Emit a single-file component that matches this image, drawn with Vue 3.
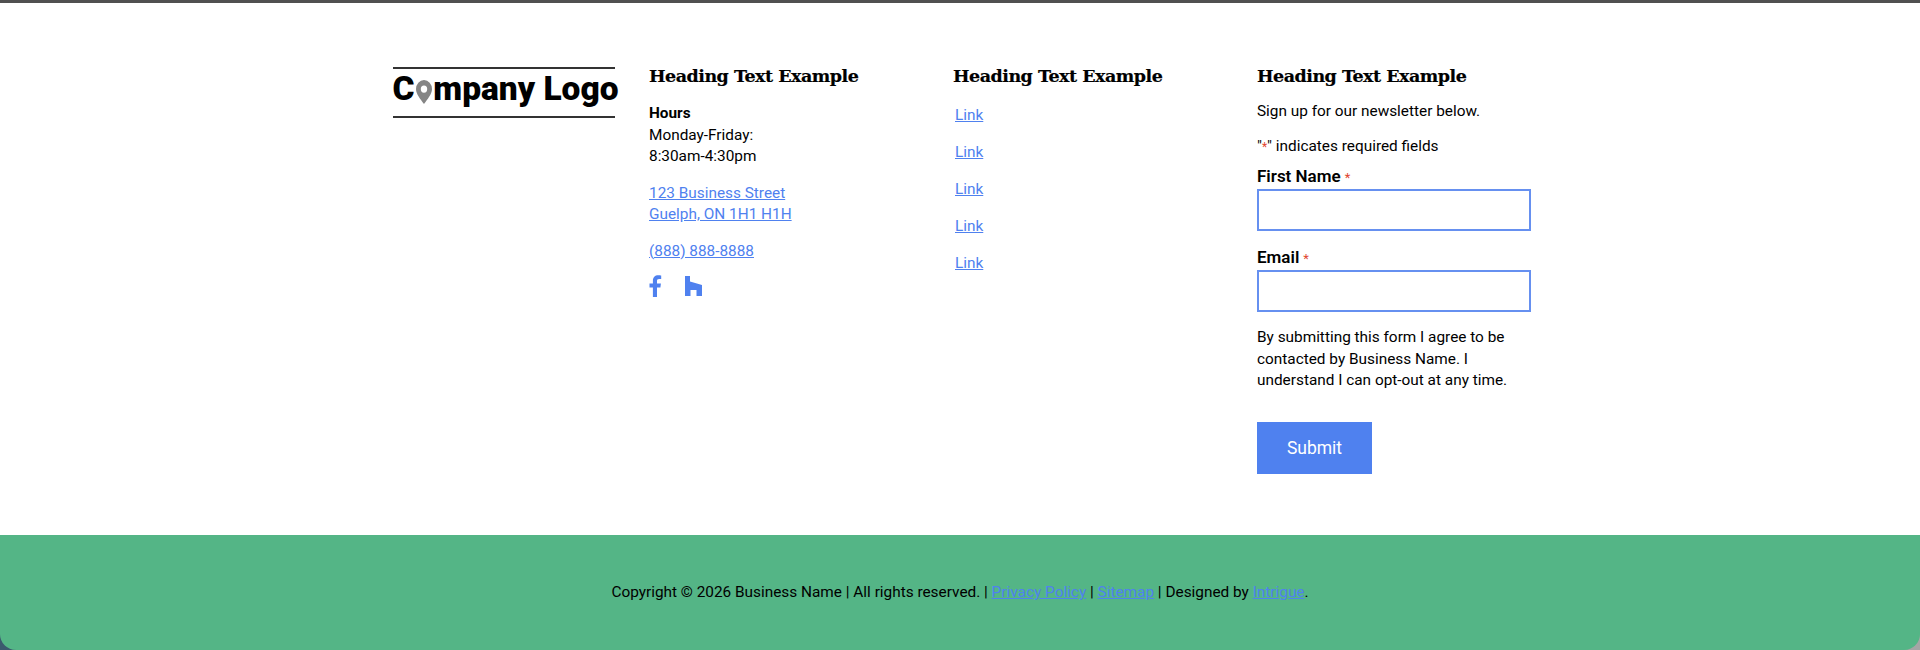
<script setup>
const links = ['Link', 'Link', 'Link', 'Link', 'Link']
const fields = ['First Name', 'Email']
</script>

<template>
  <div class="page">
    <main class="main">
      <div class="cols">
        <div class="logo-col">
          <div class="logo">
            C<span class="pin-o">o<svg class="pin" viewBox="0 0 18 24" preserveAspectRatio="none"><path fill-rule="evenodd" fill="#858585" d="M9 0a9 9 0 0 1 9 9c0 5-5 10-9 15C5 19 0 14 0 9a9 9 0 0 1 9-9zm0 5.500a3.600 3.600 0 1 0 0 7.200 3.600 3.600 0 0 0 0-7.200z"/></svg></span>mpany Logo
          </div>
        </div>
        <div class="col">
          <h3>Heading Text Example</h3>
          <p class="hours"><strong>Hours</strong><br>Monday-Friday:<br>8:30am-4:30pm</p>
          <p><a href="#">123 Business Street<br>Guelph, ON 1H1 H1H</a></p>
          <p><a href="#">(888) 888-8888</a></p>
          <div class="social">
            <svg class="fb" viewBox="0 0 12 22"><path fill="#4f81ef" d="M3.400 22V12.400H0V8.600h3.400V5.800C3.400 2.200 5.500.2 8.700.2c1.300 0 2.500.1 3 .2v3.500H9.600c-1.700 0-2.100.9-2.100 2.100v2.600h3.900l-.5 3.800H7.500V22z"/></svg>
            <svg class="hz" viewBox="0 0 17 20"><path fill="#4f81ef" d="M0 0h5v5.500l12 3.500v11h-5.500v-6h-6v6H0z"/></svg>
          </div>
        </div>
        <div class="col">
          <h3>Heading Text Example</h3>
          <ul class="links">
            <li v-for="(l, i) in links" :key="i"><a href="#">{{ l }}</a></li>
          </ul>
        </div>
        <div class="form-col">
          <h3>Heading Text Example</h3>
          <p class="signup">Sign up for our newsletter below.</p>
          <p class="legend">"<span class="req star">*</span>" indicates required fields</p>
          <form class="form" @submit.prevent>
            <div v-for="f in fields" :key="f" class="field">
              <label>{{ f }}<span class="req lab">*</span></label>
              <input type="text">
            </div>
            <p class="consent">By submitting this form I agree to be contacted by Business Name. I understand I can opt-out at any time.</p>
            <button type="submit">Submit</button>
          </form>
        </div>
      </div>
    </main>
    <div class="foot-wrap">
      <footer class="footer">
        Copyright © 2026 Business Name | All rights reserved. | <a href="#">Privacy Policy</a> | <a href="#">Sitemap</a> | Designed by <a href="#">Intrigue</a>.
      </footer>
    </div>
  </div>
</template>

<style scoped>
.page {
  width: 1920px;
  height: 650px;
  display: flex;
  flex-direction: column;
  overflow: hidden;
  font-family: Roboto, sans-serif;
  font-size: 15.36px;
  line-height: 21.5px;
  color: #000;
  border-top: 3px solid #505050;
  box-sizing: border-box;
}
.main {
  height: 532px;
  background: #fff;
  display: flex;
  justify-content: center;
}
.cols {
  width: 1138px;
  display: flex;
  padding-top: 61px;
  box-sizing: border-box;
}
.logo-col { width: 258px; flex: none; }
.col { width: 304px; flex: none; }
.form-col { width: 274px; flex: none; }
.logo {
  width: 222px;
  margin: 3px 0 0 2px;
  box-sizing: border-box;
  height: 51px;
  border-top: 2px solid #333;
  border-bottom: 2px solid #333;
  display: flex;
  justify-content: center;
  align-items: center;
  white-space: pre;
  font-weight: 900;
  font-size: 33.500px;
  line-height: 44px;
  padding: 0 0 8px 3px;
}
.pin-o {
  position: relative;
  color: transparent;
}
.pin {
  position: absolute;
  left: 1.500px;
  top: 13px;
  width: 16px;
  height: 24px;
}
h3 {
  margin: 0 0 15px;
  font-family: "DejaVu Serif", serif;
  font-weight: 700;
  font-size: 17.500px;
  letter-spacing: -0.5px;
  -webkit-text-stroke: 0.2px #000;
  line-height: 24px;
  white-space: nowrap;
}
p { margin: 0 0 15px; }
a { color: #4f81ef; text-decoration: underline; }
.hours strong { font-weight: 700; }
.social {
  display: flex;
  align-items: center;
  gap: 23px;
  margin-top: -2.500px;
}
.fb { width: 13px; height: 22px; }
.hz { width: 17px; height: 20px; }
.links {
  list-style: none;
  margin: 0;
  padding: 1.500px 0 0 2px;
}
.links li { margin-bottom: 15.500px; }
.signup { margin: -2px 0 13.500px; }
.legend { margin: 0 0 6.500px; }
.req { color: #e0452f; }
.star { font-size: 12px; }
.lab { margin-left: 4px; font-size: 13px; font-weight: 400; }
.field { margin-bottom: 15px; }
.field label {
  display: block;
  font-weight: 600;
  font-size: 17px;
  line-height: 22px;
}
.field input {
  display: block;
  width: 274px;
  height: 42px;
  box-sizing: border-box;
  border: 2px solid #6690f0;
  background: #fff;
  outline: none;
  padding: 0;
}
.consent { margin: 0 0 30px; }
button {
  display: block;
  width: 115px;
  height: 52px;
  background: #4f81ef;
  color: #fff;
  border: none;
  padding: 0;
  font-family: Roboto, sans-serif;
  font-size: 17.500px;
}
.foot-wrap {
  flex: 1;
  background: linear-gradient(90deg, #3b5a6e 50%, #a5a5a5 50%);
}
.footer {
  height: 100%;
  background: #54b586;
  border-radius: 0 0 16px 16px;
  text-align: center;
  padding-top: 47px;
  box-sizing: border-box;
}
.footer a { color: #4f81ef; }
</style>
